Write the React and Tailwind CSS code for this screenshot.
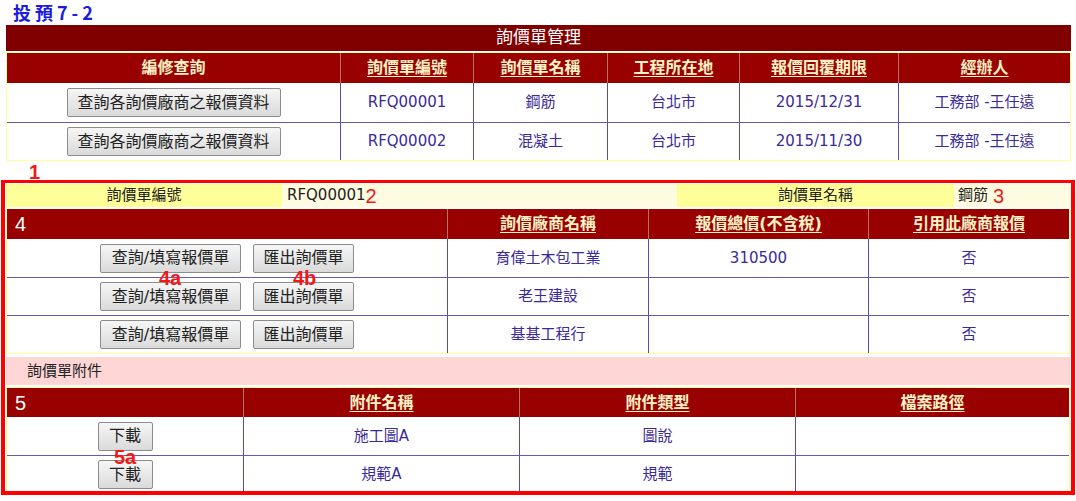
import React from 'react'

const BODY = 'text-[#3a2a9c]'
const HEAD_TXT = 'text-[#fff2c6] font-bold underline underline-offset-[3px]'

const rfqs = [
  { no: 'RFQ00001', name: '鋼筋', city: '台北市', due: '2015/12/31', owner: '工務部 -王任遠' },
  { no: 'RFQ00002', name: '混凝土', city: '台北市', due: '2015/11/30', owner: '工務部 -王任遠' },
]

const vendors = [
  { name: '育偉土木包工業', total: '310500', use: '否' },
  { name: '老王建設', total: '', use: '否' },
  { name: '基基工程行', total: '', use: '否' },
]

const files = [
  { name: '施工圖A', type: '圖說', path: '' },
  { name: '規範A', type: '規範', path: '' },
]

function Btn({ children, w }) {
  return (
    <button
      className={`${w} h-[29px] border border-[#8c8c8c] rounded-[2px] bg-gradient-to-b from-[#f6f6f6] to-[#dadada] text-[16px] leading-none text-[#222] cursor-pointer`}
    >
      {children}
    </button>
  )
}

function HeadCell({ w, first, children, plain }) {
  return (
    <div
      className={`${w} h-full flex items-center justify-center text-[16px] ${first ? '' : 'border-l border-[#b5735f]'} ${
        plain ? 'text-[#fff2c6] font-bold' : HEAD_TXT
      }`}
    >
      {children}
    </div>
  )
}

function Cell({ w, first, children }) {
  return (
    <div
      className={`${w} h-full flex items-center justify-center text-[15px] ${BODY} ${first ? '' : 'border-l border-[#5d4c9f]'}`}
    >
      {children}
    </div>
  )
}

function Tag({ children, className }) {
  return (
    <span className={`text-[20px] leading-none text-[#f01818] font-['Liberation_Sans',sans-serif] ${className}`}>
      {children}
    </span>
  )
}

export default function App() {
  return (
    <div className="w-[1076px] h-[501px] bg-white overflow-hidden font-['DejaVu_Sans','Noto_Sans_CJK_TC',sans-serif]">
      {/* page title */}
      <div className="h-[25px] pl-[13px] pt-[1px] text-[18px] leading-[22px] font-bold tracking-[4px] text-[#1b1be0] font-['Noto_Sans_CJK_TC',sans-serif]">
        投預7-2
      </div>

      {/* 詢價單管理 */}
      <div className="ml-[6px] w-[1065px]">
        <div className="h-[26px] bg-[#800000] text-white text-[17px] flex items-center justify-center">詢價單管理</div>
        <div className="mt-[1px] border border-[#ffff99]">
          <div className="flex h-[30px] bg-[#990000]">
            <HeadCell w="w-[333px]" first plain>編修查詢</HeadCell>
            <HeadCell w="w-[133px]">詢價單編號</HeadCell>
            <HeadCell w="w-[134px]">詢價單名稱</HeadCell>
            <HeadCell w="w-[132px]">工程所在地</HeadCell>
            <HeadCell w="w-[159px]">報價回覆期限</HeadCell>
            <HeadCell w="w-[172px]">經辦人</HeadCell>
          </div>
          {rfqs.map((r, i) => (
            <div key={r.no} className={`flex ${i ? 'h-[38px] border-t border-[#6a58b0]' : 'h-[39px]'}`}>
              <Cell w="w-[333px]" first>
                <Btn w="w-[214px]">查詢各詢價廠商之報價資料</Btn>
              </Cell>
              <Cell w="w-[133px]">{r.no}</Cell>
              <Cell w="w-[134px]">{r.name}</Cell>
              <Cell w="w-[132px]">{r.city}</Cell>
              <Cell w="w-[159px]">{r.due}</Cell>
              <Cell w="w-[172px]">{r.owner}</Cell>
            </div>
          ))}
        </div>
      </div>

      <div className="h-[19px] pl-[29px] pt-[1px]">
        <Tag className="font-bold">1</Tag>
      </div>

      {/* annotated detail box */}
      <div className="ml-[1px] w-[1074px] h-[315px] border-x-[4px] border-t-[3px] border-b-[4px] border-[#ff0000] px-[1px] pt-[1px] overflow-hidden">
        {/* info row */}
        <div className="flex h-[23px] text-[15px] text-[#222]">
          <div className="w-[276px] bg-[#ffff99] flex items-center justify-center">詢價單編號</div>
          <div className="w-[395px] bg-[#fffbe0] flex items-center pl-[5px]">
            RFQ00001<Tag>2</Tag>
          </div>
          <div className="w-[277px] bg-[#ffff99] flex items-center justify-center">詢價單名稱</div>
          <div className="w-[116px] bg-[#fffbe0] flex items-center pl-[4px]">
            鋼筋<Tag className="ml-[5px]">3</Tag>
          </div>
        </div>

        {/* vendors */}
        <div className="mt-[1px] border-x border-b border-[#ffff99] relative">
          <div className="flex h-[31px] bg-[#990000] border-t border-white">
            <div className="w-[440px] h-full flex items-center pl-[8px] text-white text-[20px] font-['Liberation_Sans',sans-serif]">4</div>
            <HeadCell w="w-[201px]">詢價廠商名稱</HeadCell>
            <HeadCell w="w-[220px]">報價總價(不含稅)</HeadCell>
            <HeadCell w="w-[201px]">引用此廠商報價</HeadCell>
          </div>
          {vendors.map((v, i) => (
            <div key={v.name} className={`flex h-[38px] ${i ? 'border-t border-[#6a58b0]' : ''}`}>
              <Cell w="w-[440px]" first>
                <div className="flex gap-[12px]">
                  <Btn w="w-[141px]">查詢/填寫報價單</Btn>
                  <Btn w="w-[101px]">匯出詢價單</Btn>
                </div>
              </Cell>
              <Cell w="w-[201px]">{v.name}</Cell>
              <Cell w="w-[220px]">{v.total}</Cell>
              <Cell w="w-[201px]">{v.use}</Cell>
            </div>
          ))}
          <Tag className="absolute left-[152px] top-[60px] font-bold">4a</Tag>
          <Tag className="absolute left-[286px] top-[60px] font-bold">4b</Tag>
        </div>

        {/* attachments */}
        <div className="mt-[3px] h-[28px] bg-[#ffd6d6] flex items-center pl-[21px] text-[15px] text-[#222]">詢價單附件</div>
        <div className="mt-[2px] border-x border-[#ffff99] relative">
          <div className="flex h-[30px] bg-[#990000] border-t border-[#ffff99]">
            <div className="w-[236px] h-full flex items-center pl-[8px] text-white text-[20px] font-['Liberation_Sans',sans-serif]">5</div>
            <HeadCell w="w-[276px]">附件名稱</HeadCell>
            <HeadCell w="w-[276px]">附件類型</HeadCell>
            <HeadCell w="w-[274px]">檔案路徑</HeadCell>
          </div>
          {files.map((f, i) => (
            <div key={f.name} className={`flex h-[38px] ${i ? 'border-t border-[#6a58b0]' : ''}`}>
              <Cell w="w-[236px]" first>
                <Btn w="w-[55px]">下載</Btn>
              </Cell>
              <Cell w="w-[276px]">{f.name}</Cell>
              <Cell w="w-[276px]">{f.type}</Cell>
              <Cell w="w-[274px]">{f.path}</Cell>
            </div>
          ))}
          <Tag className="absolute left-[107px] top-[60px] font-bold">5a</Tag>
        </div>
      </div>
    </div>
  )
}
